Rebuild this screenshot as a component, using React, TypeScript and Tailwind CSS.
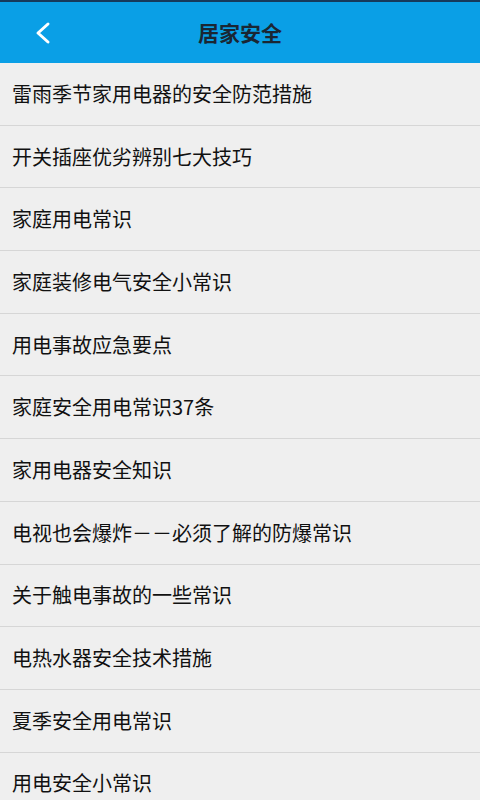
const items = [
  "雷雨季节家用电器的安全防范措施",
  "开关插座优劣辨别七大技巧",
  "家庭用电常识",
  "家庭装修电气安全小常识",
  "用电事故应急要点",
  "家庭安全用电常识37条",
  "家用电器安全知识",
  "电视也会爆炸－－必须了解的防爆常识",
  "关于触电事故的一些常识",
  "电热水器安全技术措施",
  "夏季安全用电常识",
  "用电安全小常识",
];

export default function App() {
  return (
    <div
      className="flex h-[800px] w-[480px] flex-col overflow-hidden bg-[#efefef]"
      style={{ fontFamily: '"Noto Sans CJK SC", "Noto Sans", sans-serif' }}
    >
      <div className="h-[2px] shrink-0 bg-[#163a5c]" />
      <header className="relative flex h-[61px] shrink-0 items-center justify-center bg-[#0a9fe6]">
        <svg className="absolute left-[33px] top-[19px]" width="20" height="24" viewBox="0 0 20 24" fill="none">
          <path d="M15 3 L5 12 L15 21" stroke="white" strokeWidth="3" strokeLinecap="round" strokeLinejoin="round" />
        </svg>
        <h1 className="text-[21px] font-bold text-[#1a2633]">居家安全</h1>
      </header>
      <ul>
        {items.map((t) => (
          <li key={t} className="flex h-[62.7px] items-center border-b border-[#d6d6d6] pl-3 text-[20px] text-[#111111]">
            {t}
          </li>
        ))}
      </ul>
    </div>
  );
}
